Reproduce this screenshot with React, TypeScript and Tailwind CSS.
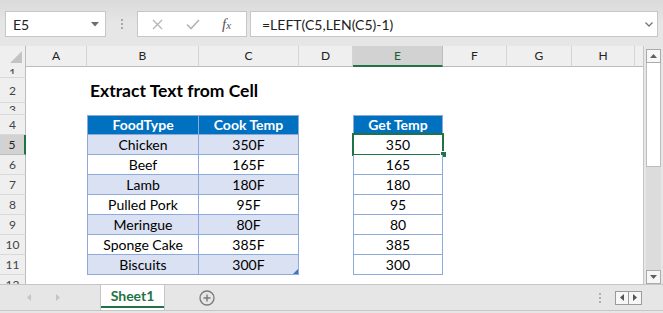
import React from 'react';

const GRID =
  'grid grid-cols-[26px_61px_112px_100px_54px_90px_64px_65px_63px_8px]';

const data: [string, string, string][] = [
  ['Chicken', '350F', '350'],
  ['Beef', '165F', '165'],
  ['Lamb', '180F', '180'],
  ['Pulled Pork', '95F', '95'],
  ['Meringue', '80F', '80'],
  ['Sponge Cake', '385F', '385'],
  ['Biscuits', '300F', '300'],
];

const letters = ['A', 'B', 'C', 'D', 'E', 'F', 'G', 'H'];

function RowHead({
  n,
  selected,
  small,
  tall,
}: {
  n: string;
  selected?: boolean;
  small?: boolean;
  tall?: boolean;
}) {
  if (small) {
    return (
      <div className="border-r border-b border-r-[#bcbcbc] border-b-[#d9d9d9] bg-[#efefef] flex justify-center overflow-hidden">
        <div className="h-[8px] overflow-hidden">
          <span className="block text-[12px] leading-[13px] text-[#444]">{n}</span>
        </div>
      </div>
    );
  }
  return (
    <div
      className={
        selected
          ? 'border-r-2 border-b border-r-[#217346] border-b-[#bdbdbd] bg-[#d2d2d2] flex items-end justify-center overflow-hidden'
          : 'border-r border-b border-r-[#bcbcbc] border-b-[#d9d9d9] bg-[#efefef] flex items-end justify-center overflow-hidden'
      }
    >
      <span
        className={
          tall
            ? 'block text-[12px] leading-[20px] pb-[1px] text-[#444]'
            : selected
            ? 'block text-[12px] leading-[19px] text-[#222]'
            : 'block text-[12px] leading-[19px] text-[#444]'
        }
      >
        {n}
      </span>
    </div>
  );
}

function Empty() {
  return <div />;
}

function DataRow({ i, row }: { i: number; row: [string, string, string] }) {
  const band = i % 2 === 0;
  const last = i === data.length - 1;
  return (
    <div className={GRID + ' h-[20px]'}>
      <RowHead n={String(i + 5)} selected={i === 0} />
      <Empty />
      <div
        className={
          band
            ? 'border-x border-b border-[#8eaadb] bg-[#d9e1f2] text-center text-[14px] leading-[19px] text-black'
            : 'border-x border-b border-[#8eaadb] bg-white text-center text-[14px] leading-[19px] text-black'
        }
      >
        {row[0]}
      </div>
      <div
        className={
          band
            ? 'relative border-r border-b border-[#8eaadb] bg-[#d9e1f2] text-center text-[14px] leading-[19px] text-black'
            : 'relative border-r border-b border-[#8eaadb] bg-white text-center text-[14px] leading-[19px] text-black'
        }
      >
        {row[1]}
        {last && (
          <svg className="absolute right-0 bottom-0" width="5" height="5" viewBox="0 0 5 5">
            <path d="M5 0 L5 5 L0 5 Z" fill="#4472c4" />
          </svg>
        )}
      </div>
      <Empty />
      <div className="relative border-x border-b border-[#8eaadb] bg-white text-center text-[14px] leading-[19px] text-black">
        {row[2]}
        {i === 0 && (
          <>
            <div className="absolute left-[-2px] top-[-2px] w-[92px] h-[23px] border-2 border-[#217346]" />
            <div className="absolute left-[86px] top-[16px] w-[7px] h-[7px] bg-white p-[1px]">
              <div className="w-full h-full bg-[#217346]" />
            </div>
          </>
        )}
      </div>
      <Empty />
      <Empty />
      <Empty />
      <Empty />
    </div>
  );
}

export default function App() {
  return (
    <div className="w-[663px] h-[313px] overflow-hidden bg-[#e6e6e6] flex flex-col font-['Lato',sans-serif]">
      {/* Formula bar */}
      <div className="h-[46px] shrink-0 flex items-start pt-[11px] bg-gradient-to-b from-[#dadada] via-[#e6e6e6] to-[#e6e6e6]">
        <div className="ml-[5px] w-[101px] h-[26px] bg-white border border-[#c6c6c6] flex items-center justify-between pl-[7px] pr-[6px]">
          <span className="text-[14px] text-[#222]">E5</span>
          <svg width="8" height="5" viewBox="0 0 8 5">
            <path d="M0 0 L8 0 L4 4.5 Z" fill="#6e6e6e" />
          </svg>
        </div>
        <div className="ml-[15px] h-[26px] flex flex-col items-center justify-center gap-[2px]">
          <div className="w-[2px] h-[2px] bg-[#a8a8a8]" />
          <div className="w-[2px] h-[2px] bg-[#a8a8a8]" />
          <div className="w-[2px] h-[2px] bg-[#a8a8a8]" />
        </div>
        <div className="ml-[14px] w-[110px] h-[26px] bg-white border border-[#c6c6c6] flex items-center">
          <svg className="ml-[14px]" width="11" height="11" viewBox="0 0 11 11">
            <path d="M1 1 L10 10 M10 1 L1 10" stroke="#b4b4b4" strokeWidth="1.3" />
          </svg>
          <svg className="ml-[23px]" width="14" height="11" viewBox="0 0 14 11">
            <path d="M1 5.5 L5 9.5 L13 1" stroke="#b4b4b4" strokeWidth="1.6" fill="none" />
          </svg>
          <span className="ml-[22px] font-['Liberation_Serif',serif] italic text-[15px] text-[#555] leading-none">
            f<span className="text-[11px]">x</span>
          </span>
        </div>
        <div className="ml-[3px] w-[408px] h-[26px] bg-white border border-[#c6c6c6] flex items-center justify-between pl-[11px] pr-[4px]">
          <span className="text-[14px] text-[#222]">=LEFT(C5,LEN(C5)-1)</span>
          <svg width="8" height="5" viewBox="0 0 8 5">
            <path d="M0.5 0.5 L4 4 L7.5 0.5" stroke="#777" strokeWidth="1.3" fill="none" />
          </svg>
        </div>
      </div>

      {/* Grid + vertical scrollbar */}
      <div className="flex h-[238px] shrink-0">
        <div className="w-[644px] h-[238px] overflow-hidden border-r border-[#c6c6c6] bg-white">
          {/* column header */}
          <div className={GRID + ' h-[20px] bg-[#efefef]'}>
            <div className="border-r border-b border-r-[#bcbcbc] border-b-[#bcbcbc] flex items-end justify-end pr-[3px] pb-[3px]">
              <svg width="12" height="12" viewBox="0 0 12 12">
                <path d="M12 0 L12 12 L0 12 Z" fill="#c3c3c3" />
              </svg>
            </div>
            {letters.map((l) =>
              l === 'E' ? (
                <div
                  key={l}
                  className="border-r border-b-2 border-r-[#bcbcbc] border-b-[#217346] bg-[#d2d2d2] text-center text-[12px] leading-[19px] text-[#1d5c38]"
                >
                  {l}
                </div>
              ) : (
                <div
                  key={l}
                  className="border-r border-b border-r-[#d4d4d4] border-b-[#bcbcbc] text-center text-[12px] leading-[19px] text-[#222]"
                >
                  {l}
                </div>
              )
            )}
            <div className="border-b border-b-[#bcbcbc]" />
          </div>

          {/* row 1 */}
          <div className={GRID + ' h-[12px]'}>
            <RowHead n="1" small />
          </div>
          {/* row 2 */}
          <div className={GRID + ' h-[25px]'}>
            <RowHead n="2" tall />
            <Empty />
            <div className="col-span-3 flex items-end pl-[3px] pb-[2px]">
              <span className="text-[17.5px] font-bold leading-[21px] text-black whitespace-nowrap">
                Extract Text from Cell
              </span>
            </div>
          </div>
          {/* row 3 */}
          <div className={GRID + ' h-[12px]'}>
            <RowHead n="3" small />
          </div>
          {/* row 4 header */}
          <div className={GRID + ' h-[20px]'}>
            <RowHead n="4" />
            <Empty />
            <div className="border border-[#8eaadb] bg-[#0070c0] text-center text-white font-bold text-[14px] leading-[18px]">
              FoodType
            </div>
            <div className="border-y border-r border-[#8eaadb] bg-[#0070c0] text-center text-white font-bold text-[14px] leading-[18px]">
              Cook Temp
            </div>
            <Empty />
            <div className="border border-[#8eaadb] bg-[#0070c0] text-center text-white font-bold text-[14px] leading-[18px]">
              Get Temp
            </div>
          </div>
          {data.map((r, i) => (
            <DataRow key={i} i={i} row={r} />
          ))}
          {/* row 12 */}
          <div className={GRID + ' h-[20px]'}>
            <RowHead n="12" />
          </div>
        </div>

        {/* vertical scrollbar */}
        <div className="w-[19px] flex flex-col pt-[3px] pl-[2px] pr-[2px]">
          <div className="h-[14px] bg-[#f7f7f7] border border-[#ababab] flex items-center justify-center">
            <svg width="7" height="4" viewBox="0 0 7 4">
              <path d="M0 4 L7 4 L3.5 0 Z" fill="#606060" />
            </svg>
          </div>
          <div className="h-[104px] bg-white border border-[#bdbdbd] border-t-0" />
          <div className="flex-1 bg-[#dcdcdc]" />
          <div className="h-[14px] bg-[#f7f7f7] border border-[#ababab] flex items-center justify-center">
            <svg width="7" height="4" viewBox="0 0 7 4">
              <path d="M0 0 L7 0 L3.5 4 Z" fill="#606060" />
            </svg>
          </div>
        </div>
      </div>

      {/* Sheet tab bar */}
      <div className="h-[29px] shrink-0 border-t border-[#c6c6c6] flex flex-col">
        <div className="h-[26px] flex items-stretch border-b border-[#c6c6c6]">
          <div className="w-[100px] flex items-center">
            <svg className="ml-[27px]" width="4" height="7" viewBox="0 0 4 7">
              <path d="M4 0 L4 7 L0 3.5 Z" fill="#c4c4c4" />
            </svg>
            <svg className="ml-[25px]" width="4" height="7" viewBox="0 0 4 7">
              <path d="M0 0 L0 7 L4 3.5 Z" fill="#c4c4c4" />
            </svg>
          </div>
          <div className="w-[65px] bg-white border-x border-[#c6c6c6] flex flex-col">
            <div className="flex-1 flex items-center justify-center">
              <span className="text-[14px] font-bold text-[#217346]">Sheet1</span>
            </div>
            <div className="h-[2px] bg-[#217346] mb-[2px]" />
          </div>
          <div className="w-[34px]" />
          <div className="flex items-center">
            <svg width="16" height="16" viewBox="0 0 16 16">
              <circle cx="8" cy="8" r="7" fill="none" stroke="#7a7a7a" strokeWidth="1.3" />
              <path d="M8 4.5 L8 11.5 M4.5 8 L11.5 8" stroke="#7a7a7a" strokeWidth="1.4" />
            </svg>
          </div>
          <div className="flex-1" />
          <div className="flex flex-col justify-center gap-[2px] mr-[14px]">
            <div className="w-[2px] h-[2px] bg-[#b0b0b0]" />
            <div className="w-[2px] h-[2px] bg-[#b0b0b0]" />
            <div className="w-[2px] h-[2px] bg-[#b0b0b0]" />
          </div>
          <div className="flex items-center mr-[21px]">
            <div className="w-[14px] h-[14px] bg-[#f7f7f7] border border-[#9a9a9a] flex items-center justify-center">
              <svg width="4" height="7" viewBox="0 0 4 7">
                <path d="M4 0 L4 7 L0 3.5 Z" fill="#555" />
              </svg>
            </div>
            <div className="w-[13px] h-[14px] bg-[#f7f7f7] border border-l-0 border-[#9a9a9a] flex items-center justify-center">
              <svg width="4" height="7" viewBox="0 0 4 7">
                <path d="M0 0 L0 7 L4 3.5 Z" fill="#555" />
              </svg>
            </div>
          </div>
        </div>
      </div>
    </div>
  );
}
